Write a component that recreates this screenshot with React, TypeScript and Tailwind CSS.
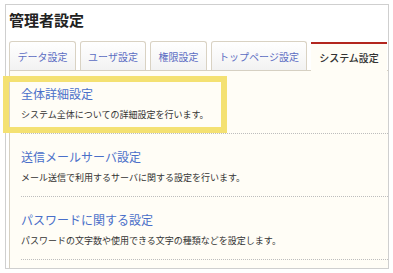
import React from "react";

const tabs = [
  { label: "データ設定", w: "w-[67px]" },
  { label: "ユーザ設定", w: "w-[66px]" },
  { label: "権限設定", w: "w-[57px]" },
  { label: "トップページ設定", w: "w-[96px]" },
];

const sections = [
  {
    title: "全体詳細設定",
    desc: "システム全体についての詳細設定を行います。",
  },
  {
    title: "送信メールサーバ設定",
    desc: "メール送信で利用するサーバに関する設定を行います。",
  },
  {
    title: "パスワードに関する設定",
    desc: "パスワードの文字数や使用できる文字の種類などを設定します。",
  },
];

export default function App() {
  return (
    <div
      className="relative w-[393px] h-[273px] bg-white overflow-hidden"
      style={{ fontFamily: '"Noto Sans CJK JP", "Noto Sans", sans-serif' }}
    >
      {/* PANEL */}
      <div className="ml-[5px] mt-[4px] w-[384px] h-[265px] border border-[#cfcfcf] bg-white flex flex-col">
        <h1 className="pl-[3px] pt-[7px] text-[15px] leading-[16px] font-bold text-[#222]">
          管理者設定
        </h1>

        {/* TABS */}
        <div className="flex items-end gap-[4px] ml-[3px] mt-[13px]">
          {tabs.map((t) => (
            <div
              key={t.label}
              className={`${t.w} h-[29px] flex items-center justify-center rounded-t-[3px] border border-b-0 border-[#d9d2c3] bg-gradient-to-b from-white to-[#f2f2f2] text-[10px] text-[#5b6cc2]`}
            >
              {t.label}
            </div>
          ))}
          <div className="w-[76px] h-[29px] -mb-px relative z-10 flex items-center justify-center border-t-2 border-t-[#b3261e] bg-[#fffdf6] text-[10px] font-medium text-[#333]">
            システム設定
          </div>
        </div>

        {/* CONTENT */}
        <div className="flex-1 ml-[3px] border-t border-l border-[#d6d0c2] bg-[#fffdf6]">
          {sections.map((s) => (
            <div
              key={s.title}
              className="ml-[11px] pt-[16px] pb-[12px] border-b border-dotted border-[#bdbdbd]"
            >
              <div className="text-[12px] leading-[14px] text-[#4a6fc9]">
                {s.title}
              </div>
              <div className="mt-[8px] text-[9px] leading-[12px] text-[#333]">
                {s.desc}
              </div>
            </div>
          ))}
        </div>
      </div>

      {/* HIGHLIGHT */}
      <div className="absolute left-[3px] top-[76px] w-[224px] h-[57px] border-[6px] border-[#f4e172]" />
    </div>
  );
}
